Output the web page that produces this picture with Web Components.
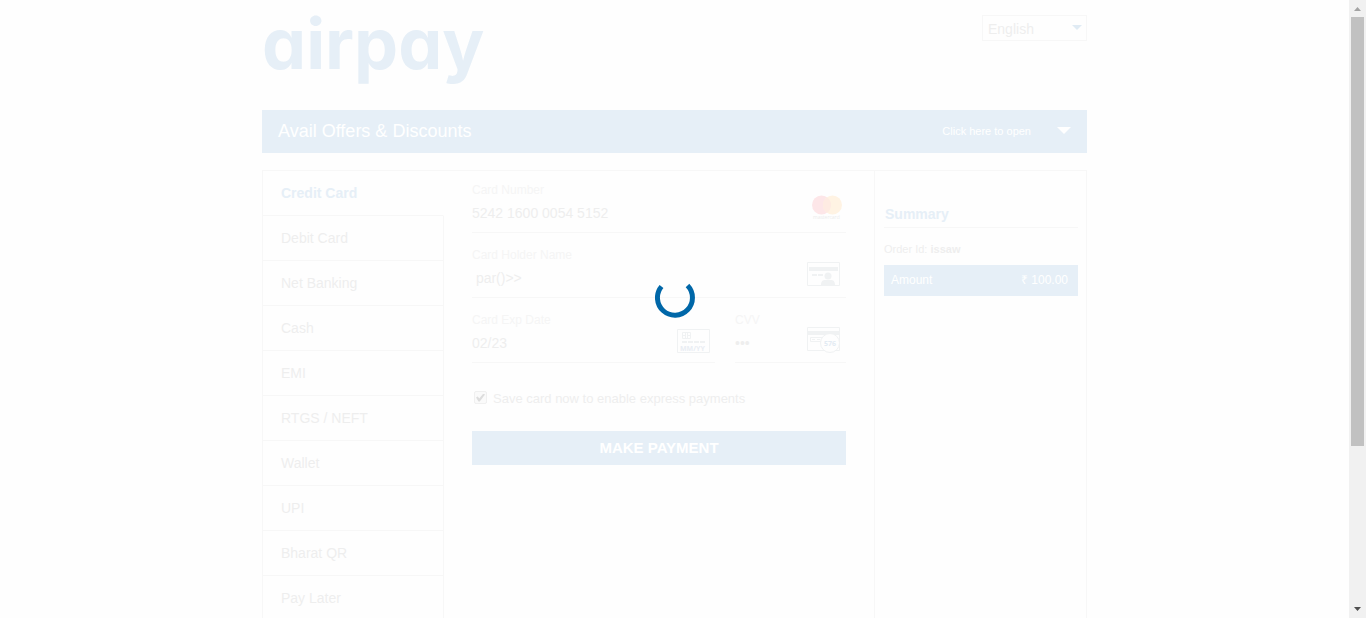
<!DOCTYPE html>
<html lang="en">
<head>
<meta charset="utf-8">
<title>airpay</title>
<style>
html,body{margin:0;height:100%;overflow:hidden;background:#fefefe}
body{font-family:"Liberation Sans",Arial,sans-serif;font-size:14px;line-height:20px;color:#eee;
--blue:#e6eff7;--line:#f7f7f7;--label:#f5f5f5;--value:#eee}
</style>
</head>
<body>
<pay-app></pay-app>
<script>
function define(name, html, setup) {
  const t = document.createElement('template');
  t.innerHTML = '<style>*{box-sizing:border-box}:host{display:block}:host([hidden]){display:none}</style>' + html;
  customElements.define(name, class extends HTMLElement {
    constructor() {
      super();
      this.attachShadow({mode: 'open'}).append(t.content.cloneNode(true));
    }
    connectedCallback() { if (setup) setup(this, this.shadowRoot); }
  });
}

define('pay-header', `<style>
:host{display:flex;justify-content:space-between;align-items:flex-start;height:110px}
a{font:700 70px/88px Inter,sans-serif;font-optical-sizing:none;font-variation-settings:"opsz" 14;font-feature-settings:"cv11";color:var(--blue);text-decoration:none}
.lang{position:relative;margin-top:15px}
select{appearance:none;width:105px;height:26px;padding:2px 5px 0;border:1px solid var(--line);border-radius:0;background:transparent;font:inherit;color:var(--value)}
svg{position:absolute;right:5px;top:10px;pointer-events:none}
</style>
<a href="#">airpay</a>
<div class="lang"><select aria-label="Language"><option>English</option></select>
<svg width="10" height="5"><path d="M0 0h10L5 5z" fill="#e0ebf4"/></svg></div>`);

define('offer-bar', `<style>
button{display:flex;align-items:center;width:100%;height:43px;padding:0 16px 2px;border:0;background:var(--blue);color:#fff;font:inherit;font-size:18px;text-align:left}
span{flex:1}small{font-size:11px;margin-right:26px}svg{display:block}
</style>
<button type="button"><span><slot></slot></span><small>Click here to open</small><svg width="14" height="7"><path d="M0 0h14L7 7z" fill="#fff"/></svg></button>`);

define('pay-method', `<style>
a{display:flex;align-items:center;height:45px;padding:0 18px;border:solid var(--line);border-width:0 1px 1px 0;color:var(--value);text-decoration:none}
:host([active]) a{border-right-color:transparent;font-weight:700;color:var(--blue)}
</style><a href="#"><slot></slot></a>`);

define('card-field', `<style>
:host{height:65px;padding-top:12px}
.box{display:flex;height:50px;border-bottom:1px solid var(--line);padding-right:4px}
.text{flex:1;min-width:0}
label{display:block;font-size:12px;line-height:14px;color:var(--label)}
input{display:block;width:100%;height:20px;margin-top:6px;padding:0;border:0;outline:0;background:transparent;color:var(--value);font:inherit}
::slotted(svg){display:block;align-self:flex-end;margin-bottom:7px;flex:none}
</style>
<div class="box"><div class="text"><label for="f"></label><input id="f"></div><slot></slot></div>`,
(el, r) => {
  r.querySelector('label').textContent = el.getAttribute('label');
  const i = r.querySelector('input');
  i.type = el.getAttribute('type') || 'text';
  i.value = el.getAttribute('value');
});

define('card-form', `<style>
:host{padding:0 28px}
.row{display:grid;grid-template-columns:243px 1fr;column-gap:20px}
card-field{min-width:0}
.save{display:flex;align-items:center;gap:6px;height:20px;margin:23px 0 22px;padding-left:2px;font-size:13px}
input{appearance:none;width:13px;height:13px;margin:0;margin-bottom:3px;border:1px solid #f0f0f0;border-radius:2px;background:#fafafa;display:grid;place-items:center}
input:checked::before{content:"";width:9px;height:8px;background:#ddd;clip-path:polygon(0 50%,20% 38%,36% 62%,82% 0,100% 14%,42% 100%,28% 100%)}
button{display:block;width:100%;height:34px;border:0;background:var(--blue);color:#fff;font:inherit;font-size:15px;font-weight:700}
text{font-family:"Open Sans",sans-serif}
</style>
<card-field label="Card Number" value="5242 1600 0054 5152">
<svg width="30" height="30" viewBox="0 0 30 30"><circle cx="9.5" cy="10" r="9.5" fill="#fde6e8"/><circle cx="20.5" cy="10" r="9.5" fill="#fff3e3"/><path d="M15 2.2a9.5 9.5 0 0 1 0 15.600a9.500 9.500 0 0 1 0-15.600z" fill="#feebe2"/><text x="1" y="24" font-size="5" fill="#ececec">mastercard</text></svg>
</card-field>
<card-field label="Card Holder Name" value=" par()&gt;&gt;">
<svg style="margin-right:2px" width="33" height="28" viewBox="0 0 33 28" fill="#f0f2f3"><path d="M.5.5h32v23H.5z" fill="none" stroke="#f0f2f3"/><path d="M2 5h29v4H2zM5 12h5v2H5zM11 12h5v2h-5zM14 23c0-4 2-5 4-5h6c2 0 4 1 4 5z"/><circle cx="21" cy="14" r="3.500"/></svg>
</card-field>
<div class="row">
<card-field label="Card Exp Date" value="02/23">
<svg style="margin-right:1px" width="33" height="26" viewBox="0 0 33 26" fill="#f0f2f3"><path d="M.5.5h32v23H.5z" fill="none" stroke="#f0f2f3"/><path d="M5.500 3.500h8v6h-8zM8.500 3.500v6M10.500 3.500v6M5.500 6.500h3M10.500 6.500h3" fill="none" stroke="#f0f2f3"/><path d="M5 12h5v2H5zM11 12h5v2h-5zM17 12h5v2h-5zM23 12h5v2h-5z"/><text x="3" y="22" font-size="7" font-weight="700" fill="#e9edf3">MM/YY</text></svg>
</card-field>
<card-field label="CVV" type="password" value="576">
<svg style="margin-right:2px" width="33" height="28" viewBox="0 0 33 28" fill="#f0f2f3"><path d="M.5.5h32v23H.5z" fill="none" stroke="#f0f2f3"/><path d="M1 4h31v4H1zM5 12h3v1H5zM10 12h3v1h-3z"/><path d="M14 14.500H3.500v-4H15" fill="none" stroke="#f0f2f3"/><circle cx="23" cy="16" r="9.500" fill="#fefefe" stroke="#f0f2f3"/><text x="17" y="19" font-size="7" font-weight="700" fill="#e3ebf3">576</text></svg>
</card-field>
</div>
<div class="save"><input type="checkbox" id="save" checked><label for="save">Save card now to enable express payments</label></div>
<button type="button">MAKE PAYMENT</button>`);

define('order-summary', `<style>
:host{border-left:1px solid var(--line);padding:33px 8px 0 9px}
h2{margin:0;padding:0 1px;height:24px;border-bottom:1px solid var(--line);font-size:14px;line-height:20px;color:var(--blue)}
p{margin:11px 0 6px;font-size:11px;line-height:20px}
.amount{display:flex;justify-content:space-between;height:31px;padding:0 10px 0 7px;background:var(--blue);color:#fff;font-size:12px;line-height:30px}
</style>
<h2>Summary</h2><p>Order Id: <b>issaw</b></p>
<div class="amount"><span>Amount</span><span>₹ 100.00</span></div>`);

define('loading-spinner', `<style>:host{position:absolute;left:50%;top:278px;margin-left:-20px}svg{display:block}</style>
<svg width="40" height="40" role="img" aria-label="Loading"><path d="M6.500 8.500A17.500 17.500 0 1 0 32.500 7.500" fill="none" stroke="#0067a8" stroke-width="5"/></svg>`);

define('page-scrollbar', `<style>
:host{display:flex;flex-direction:column;background:#f1f1f1;padding:0 2px}
svg{display:block;height:17px;flex:none}
.track{flex:1}.thumb{height:73.4%;background:#c1c1c1}
</style>
<svg width="13"><path d="M3 11h7L6.500 7z" fill="#a3a3a3"/></svg><div class="track"><div class="thumb"></div></div><svg width="13"><path d="M3 6h7l-3.500 4z" fill="#505050"/></svg>`);

define('pay-app', `<style>
:host{display:grid;grid-template-columns:1fr 17px;grid-template-rows:100vh}
.page{position:relative;overflow:hidden;min-width:0}
main{max-width:825px;margin:0 auto}
.panel{display:grid;grid-template-columns:181px 1fr 212px;margin-top:17px;border:1px solid var(--line);min-height:110vh}
nav{display:block}
</style>
<div class="page"><main>
<pay-header></pay-header>
<offer-bar>Avail Offers &amp; Discounts</offer-bar>
<div class="panel">
<nav><pay-method active>Credit Card</pay-method><pay-method>Debit Card</pay-method><pay-method>Net Banking</pay-method><pay-method>Cash</pay-method><pay-method>EMI</pay-method><pay-method>RTGS / NEFT</pay-method><pay-method>Wallet</pay-method><pay-method>UPI</pay-method><pay-method>Bharat QR</pay-method><pay-method>Pay Later</pay-method></nav>
<card-form></card-form>
<order-summary></order-summary>
</div></main>
<loading-spinner></loading-spinner></div>
<page-scrollbar></page-scrollbar>`);
</script>
</body>
</html>
